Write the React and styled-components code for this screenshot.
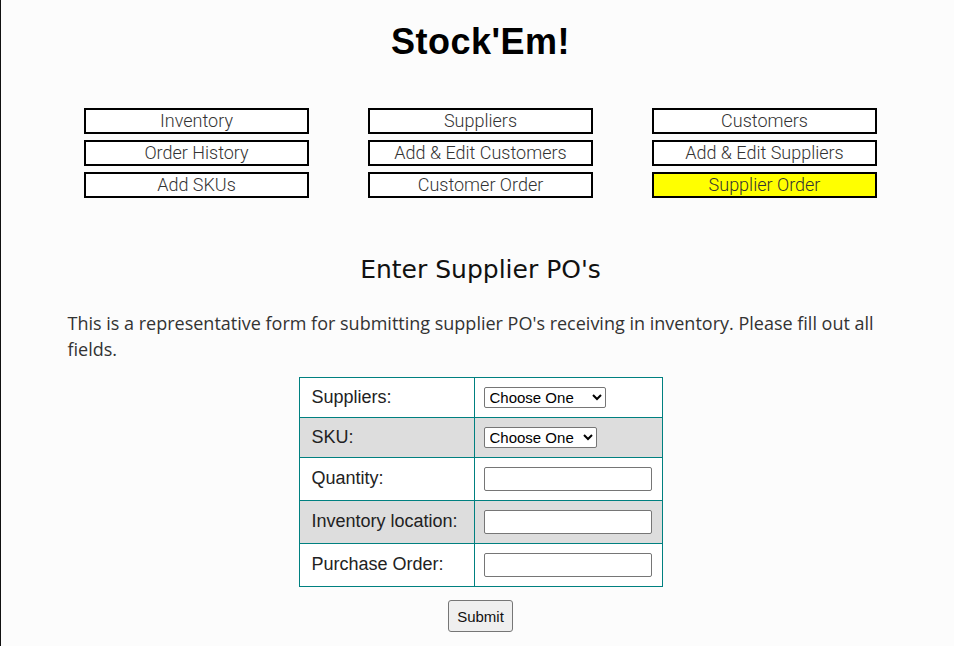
import styled, { createGlobalStyle } from "styled-components";

const GlobalStyle = createGlobalStyle`
  html, body {
    margin: 0;
    padding: 0;
    background: #fcfcfc;
  }
  #root {
    min-height: 100vh;
    border-left: 1px solid #111;
  }
`;

const navItems = [
  "Inventory",
  "Suppliers",
  "Customers",
  "Order History",
  "Add & Edit Customers",
  "Add & Edit Suppliers",
  "Add SKUs",
  "Customer Order",
  "Supplier Order",
];

const fields = [
  { label: "Suppliers:", type: "select", width: 122 },
  { label: "SKU:", type: "select", width: 113 },
  { label: "Quantity:", type: "input" },
  { label: "Inventory location:", type: "input" },
  { label: "Purchase Order:", type: "input" },
];

const App = () => {
  return (
    <>
      <GlobalStyle />
      <Page>
        <Title>Stock'Em!</Title>
        <NavGrid>
          {navItems.map((item) => (
            <NavButton key={item} active={item === "Supplier Order"}>
              {item}
            </NavButton>
          ))}
        </NavGrid>
        <Heading>Enter Supplier PO's</Heading>
        <Intro>
          This is a representative form for submitting supplier PO's receiving
          in inventory. Please fill out all fields.
        </Intro>
        <Form onSubmit={(e) => e.preventDefault()}>
          <FormTable>
            <tbody>
              {fields.map(({ label, type, width }, i) => (
                <Row key={label} shaded={i % 2 === 1} tall={type === "input"}>
                  <LabelCell>{label}</LabelCell>
                  <FieldCell>
                    {type === "select" ? (
                      <Select style={{ width }} defaultValue="">
                        <option value="">Choose One</option>
                      </Select>
                    ) : (
                      <TextInput type="text" />
                    )}
                  </FieldCell>
                </Row>
              ))}
            </tbody>
          </FormTable>
          <SubmitButton type="submit">Submit</SubmitButton>
        </Form>
      </Page>
    </>
  );
};

export default App;

const Page = styled.div`
  padding: 0 0 20px 6px;
  display: flex;
  flex-direction: column;
  align-items: center;
`;

const Title = styled.h1`
  margin: 20px 0 0;
  font-family: "Liberation Sans", Arial, sans-serif;
  font-weight: 700;
  font-size: 36px;
  line-height: 44px;
  letter-spacing: 0.5px;
  color: #000;
`;

const NavGrid = styled.nav`
  margin-top: 44px;
  display: grid;
  grid-template-columns: repeat(3, 225px);
  column-gap: 59px;
  row-gap: 6px;
`;

const NavButton = styled.div`
  box-sizing: border-box;
  height: 26px;
  border: 2px solid #000;
  background: ${(props) => (props.active ? "#ffff00" : "#fff")};
  font-family: Roboto, "Liberation Sans", sans-serif;
  font-weight: 300;
  font-size: 18px;
  line-height: 22px;
  color: #333;
  text-align: center;
  cursor: pointer;
`;

const Heading = styled.h2`
  margin: 56px 0 0;
  font-family: "DejaVu Sans", "Liberation Sans", sans-serif;
  font-weight: 400;
  font-size: 25px;
  line-height: 32px;
  color: #111;
`;

const Intro = styled.p`
  width: 826px;
  margin: 24px 0 0;
  font-family: "Open Sans", sans-serif;
  font-size: 18px;
  line-height: 26px;
  color: #333;
`;

const Form = styled.form`
  margin-top: 15px;
  display: flex;
  flex-direction: column;
  align-items: center;
  gap: 13px;
`;

const FormTable = styled.table`
  border-collapse: collapse;
  border: 1px solid #008080;
`;

const Row = styled.tr`
  height: ${(props) => (props.tall ? "43px" : "40px")};
  background: ${(props) => (props.shaded ? "#dddddd" : "#fff")};
`;

const LabelCell = styled.td`
  box-sizing: border-box;
  width: 175px;
  padding: 0 12px 1px;
  border: 1px solid #008080;
  font-family: "Liberation Sans", Arial, sans-serif;
  font-size: 18px;
  color: #222;
  vertical-align: middle;
`;

const FieldCell = styled.td`
  box-sizing: border-box;
  width: 188px;
  padding: 0 9px;
  border: 1px solid #008080;
  vertical-align: middle;
`;

const Select = styled.select`
  height: 21px;
  padding: 0 1px;
  font-family: "Liberation Sans", Arial, sans-serif;
  font-size: 15px;
  color: #000;
  background: #fff;
  border: 1px solid #767676;
  border-radius: 2px;
`;

const TextInput = styled.input`
  box-sizing: border-box;
  width: 168px;
  height: 24px;
  border: 1px solid #767676;
  border-radius: 2px;
  background: #fff;
`;

const SubmitButton = styled.button`
  box-sizing: border-box;
  width: 65px;
  height: 32px;
  font-family: "Liberation Sans", Arial, sans-serif;
  font-size: 15px;
  color: #111;
  background: #efefef;
  border: 1px solid #767676;
  border-radius: 3px;
`;
